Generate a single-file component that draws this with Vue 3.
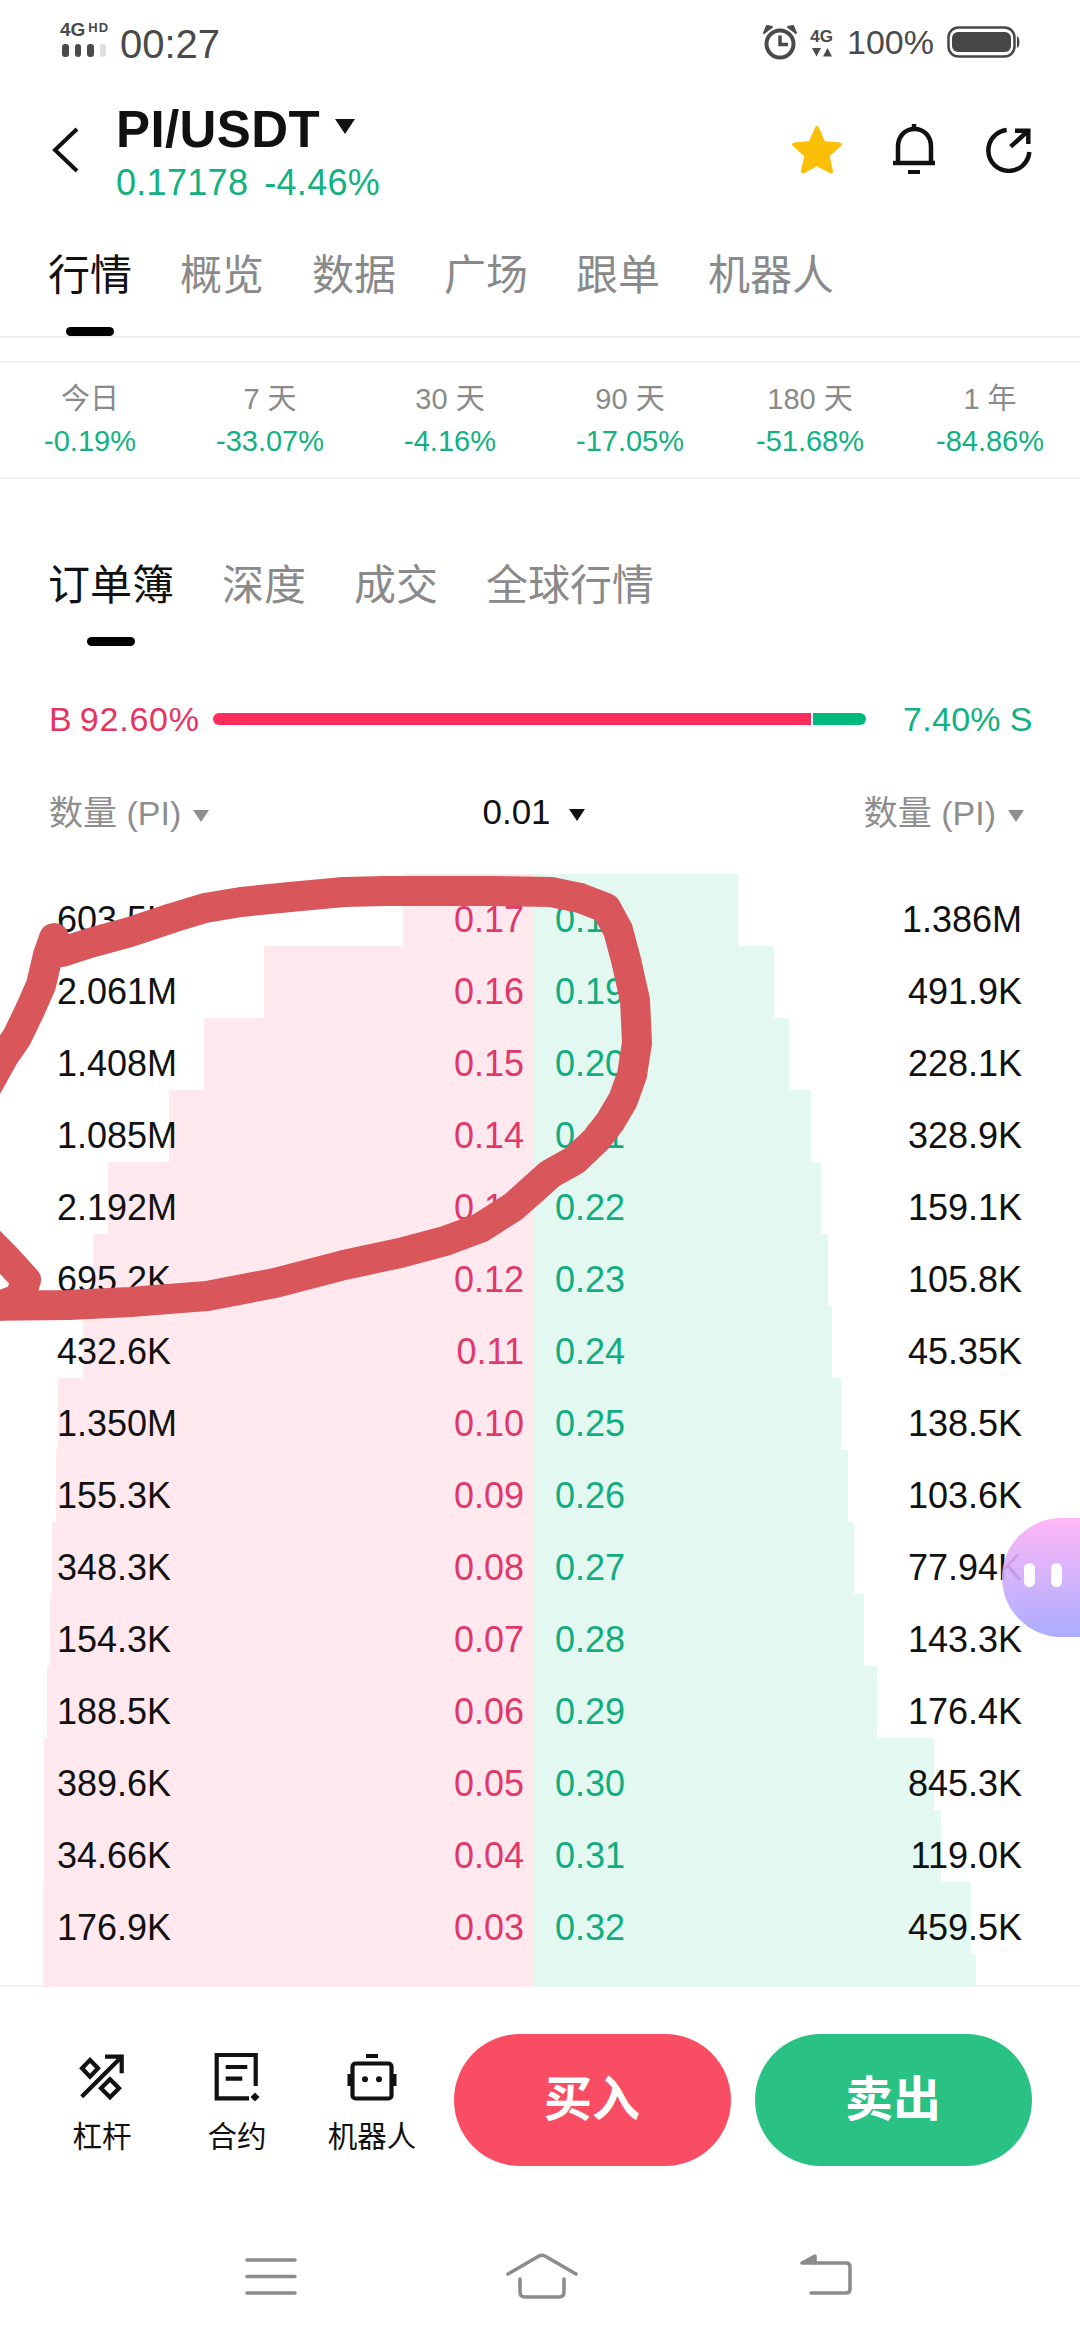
<template>
  <div class="page">
    <div class="status">
      <div class="net">
        <div class="net-top"><span class="g4">4G</span><span class="hd">HD</span></div>
        <div class="bars">
          <i></i><i></i><i></i><i class="off"></i>
        </div>
      </div>
      <span class="time">00:27</span>
      <div class="status-right">
        <svg class="alarm" width="36" height="36" viewBox="0 0 36 36">
          <circle cx="18" cy="20" r="13.5" fill="none" stroke="#4a4a4a" stroke-width="4" />
          <path d="M18 11.5V20.5H26" fill="none" stroke="#4a4a4a" stroke-width="3.5" />
          <path d="M2 9L10 3L5 2ZM34 9L26 3L31 2Z" fill="#4a4a4a" stroke="#4a4a4a" stroke-width="2" stroke-linejoin="round" />
        </svg>
        <div class="lte">
          <span>4G</span>
          <svg width="22" height="9" viewBox="0 0 22 9"><path d="M1 0H10L5.500 8.500ZM12 8.500H21L16.500 0Z" fill="#4a4a4a" /></svg>
        </div>
        <span class="pct">100%</span>
        <svg class="battery" width="74" height="32" viewBox="0 0 74 32">
          <rect x="1.500" y="1.500" width="66" height="29" rx="10" fill="none" stroke="#454745" stroke-width="2.500" />
          <rect x="5" y="6" width="59" height="20" rx="6" fill="#454745" />
          <path d="M70 10C73 11 73.500 21 70 22Z" fill="#454745" />
        </svg>
      </div>
    </div>

    <div class="head">
      <svg class="back" width="28" height="46" viewBox="0 0 28 46">
        <path d="M25 2L3 23L25 44" fill="none" stroke="#111" stroke-width="4" />
      </svg>
      <div class="title">
        <div class="pair">PI/USDT<span class="tri big"></span></div>
        <div class="price"><span>0.17178</span><span>-4.46%</span></div>
      </div>
      <div class="head-icons">
        <svg width="54" height="52" viewBox="0 0 54 52">
          <path d="M27 5L33.500 20.100L49.800 21.600L37.500 32.400L41.100 48.400L27 41L12.900 48.400L16.500 32.400L4.200 21.600L20.500 20.100Z" fill="#fcbf07" stroke="#fcbf07" stroke-width="4" stroke-linejoin="round" />
        </svg>
        <svg width="48" height="54" viewBox="0 0 48 54">
          <path d="M8 41V25C8 14 15 7 24.500 7C34 7 41 14 41 25V41" fill="none" stroke="#111" stroke-width="4.500" />
          <path d="M3 41H45" stroke="#111" stroke-width="4.500" />
          <path d="M24 2V8" stroke="#111" stroke-width="4.500" />
          <rect x="18" y="48" width="12" height="4" fill="#111" />
        </svg>
        <svg width="48" height="48" viewBox="0 0 48 48">
          <path d="M22.700 5A20.500 20.500 0 1 0 45.300 27" fill="none" stroke="#111" stroke-width="4.500" />
          <path d="M26.700 21.700L44.300 5.700M31 5.700H44.300V19" fill="none" stroke="#111" stroke-width="4.500" />
        </svg>
      </div>
    </div>

    <div class="tabs main">
      <div v-for="(t, i) in mainTabs" :key="t" class="tab" :class="{ on: i === 0 }">
        <span>{{ t }}</span>
        <i></i>
      </div>
    </div>

    <div class="periods">
      <div v-for="p in periods" :key="p.label" class="period">
        <span class="p-label">{{ p.label }}</span>
        <span class="p-value">{{ p.value }}</span>
      </div>
    </div>

    <div class="tabs sub">
      <div v-for="(t, i) in subTabs" :key="t" class="tab" :class="{ on: i === 0 }">
        <span>{{ t }}</span>
        <i></i>
      </div>
    </div>

    <div class="ratio">
      <span class="buy-pct">B 92.60%</span>
      <div class="ratio-bar">
        <div class="r-buy"></div>
        <div class="r-sell"></div>
      </div>
      <span class="sell-pct">7.40% S</span>
    </div>

    <div class="book-head">
      <span class="col-label">数量 (PI)<span class="tri grey"></span></span>
      <span class="step">0.01<span class="tri"></span></span>
      <span class="col-label">数量 (PI)<span class="tri grey"></span></span>
    </div>

    <div class="book">
      <div v-for="(r, i) in rows" :key="i" class="row" :class="{ stub: !r.bid }">
        <div class="band pink" :style="{ width: 534 - r.from + 'px' }"></div>
        <div class="band mint" :style="{ width: r.to - 534 + 'px' }"></div>
        <template v-if="r.bid">
          <span class="qty">{{ r.bidQty }}</span>
          <span class="bid">{{ r.bid }}</span>
          <span class="ask">{{ r.ask }}</span>
          <span class="qty right">{{ r.askQty }}</span>
        </template>
      </div>
    </div>

    <div class="footer">
      <div class="actions">
        <div class="tool">
          <svg width="48" height="48" viewBox="0 0 48 48" fill="none" stroke="#111" stroke-width="4.200">
            <path d="M3.700 43.700L43.700 3.700M27 3.700H43.700V20.300" />
            <path d="M12 7L20 15.300L12 23.600L4 15.300Z" />
            <path d="M32 26.300L41 35.300L32 44.300L23 35.300Z" />
          </svg>
          <span>杠杆</span>
        </div>
        <div class="tool">
          <svg width="48" height="48" viewBox="0 0 48 48" fill="none" stroke="#111" stroke-width="4.200">
            <path d="M42.700 33V2H3.700V45.300H36" />
            <path d="M12.700 14H34.300M12.700 25.700H29.300" />
            <path d="M42 39.500L46.500 44L42 48.500L37.500 44Z" fill="#111" stroke="none" />
          </svg>
          <span>合约</span>
        </div>
        <div class="tool">
          <svg width="52" height="48" viewBox="0 0 52 48" fill="none" stroke="#111" stroke-width="4.200">
            <rect x="6.500" y="10.500" width="39" height="35" rx="3" />
            <rect x="20" y="1" width="12" height="4" fill="#111" stroke="none" />
            <rect x="1.500" y="21" width="4" height="12" fill="#111" stroke="none" />
            <rect x="46.500" y="21" width="4" height="12" fill="#111" stroke="none" />
            <circle cx="19" cy="26.300" r="3" fill="#111" stroke="none" />
            <circle cx="33" cy="26.300" r="3" fill="#111" stroke="none" />
          </svg>
          <span>机器人</span>
        </div>
        <div class="btn buy">买入</div>
        <div class="btn sell">卖出</div>
      </div>
      <div class="nav">
        <svg width="52" height="42" viewBox="0 0 52 42" fill="none" stroke="#8c8c8c" stroke-width="3.600" stroke-linecap="round">
          <path d="M2 5H50M2 21.500H50M2 38H50" />
        </svg>
        <svg class="nav-home" width="72" height="46" viewBox="0 0 72 46" fill="none" stroke="#8c8c8c" stroke-width="3.600" stroke-linecap="round" stroke-linejoin="round">
          <path d="M2 21L33 3Q36 1.500 39 3L70 21" />
          <path d="M14 26V39Q14 44 19 44H53Q58 44 58 39V26" />
        </svg>
        <svg class="nav-back" width="54" height="46" viewBox="0 0 54 46" fill="none" stroke="#8c8c8c" stroke-width="3.600" stroke-linecap="round" stroke-linejoin="round">
          <path d="M16 3L3 10H16Z" fill="#8c8c8c" />
          <path d="M16 10H47Q51 10 51 14V36Q51 40 47 40H12" />
        </svg>
      </div>
    </div>

    <svg class="scribble" width="1080" height="2340" viewBox="0 0 1080 2340" fill="none">
      <path :d="scribble" stroke="#d9565b" stroke-width="30" stroke-linecap="round" stroke-linejoin="round" />
    </svg>

    <div class="bubble">
      <i></i><i></i>
    </div>
  </div>
</template>

<script setup>
const mainTabs = ['行情', '概览', '数据', '广场', '跟单', '机器人']
const subTabs = ['订单簿', '深度', '成交', '全球行情']

const periods = [
  { label: '今日', value: '-0.19%' },
  { label: '7 天', value: '-33.07%' },
  { label: '30 天', value: '-4.16%' },
  { label: '90 天', value: '-17.05%' },
  { label: '180 天', value: '-51.68%' },
  { label: '1 年', value: '-84.86%' }
]

const rows = [
  { bidQty: '603.5K', bid: '0.17', ask: '0.18', askQty: '1.386M', from: 403, to: 738 },
  { bidQty: '2.061M', bid: '0.16', ask: '0.19', askQty: '491.9K', from: 264, to: 774 },
  { bidQty: '1.408M', bid: '0.15', ask: '0.20', askQty: '228.1K', from: 204, to: 789 },
  { bidQty: '1.085M', bid: '0.14', ask: '0.21', askQty: '328.9K', from: 169, to: 811 },
  { bidQty: '2.192M', bid: '0.13', ask: '0.22', askQty: '159.1K', from: 108, to: 821 },
  { bidQty: '695.2K', bid: '0.12', ask: '0.23', askQty: '105.8K', from: 93, to: 828 },
  { bidQty: '432.6K', bid: '0.11', ask: '0.24', askQty: '45.35K', from: 83, to: 832 },
  { bidQty: '1.350M', bid: '0.10', ask: '0.25', askQty: '138.5K', from: 58, to: 841 },
  { bidQty: '155.3K', bid: '0.09', ask: '0.26', askQty: '103.6K', from: 56, to: 848 },
  { bidQty: '348.3K', bid: '0.08', ask: '0.27', askQty: '77.94K', from: 52, to: 854 },
  { bidQty: '154.3K', bid: '0.07', ask: '0.28', askQty: '143.3K', from: 50, to: 864 },
  { bidQty: '188.5K', bid: '0.06', ask: '0.29', askQty: '176.4K', from: 47, to: 877 },
  { bidQty: '389.6K', bid: '0.05', ask: '0.30', askQty: '845.3K', from: 44, to: 934 },
  { bidQty: '34.66K', bid: '0.04', ask: '0.31', askQty: '119.0K', from: 44, to: 941 },
  { bidQty: '176.9K', bid: '0.03', ask: '0.32', askQty: '459.5K', from: 43, to: 971 },
  { from: 43, to: 976 }
]

// hand drawn circle over the book, traced from the picture
const scribble =
  'M-16 1092 L4 1056 L17 1037 L30 1010 L41 985 L48 955 L54 938 L62 952 ' +
  'L90 943 L130 932 L172 918 L205 908 L241 902 L290 897 L344 892 L385 891 L427 891 ' +
  'L490 891 L551 892 L580 898 L606 908 L618 930 L626 960 L635 1000 L637 1043 ' +
  'L632 1075 L623 1100 L610 1122 L596 1140 L575 1160 L550 1174 L530 1192 L513 1207 L480 1228 ' +
  'L445 1241 L400 1253 L344 1265 L275 1283 L207 1296 L130 1302 L69 1305 L-20 1306 ' +
  'M-20 1232 L6 1258 L26 1280 L20 1298 L0 1306'
</script>

<style>
html,
body {
  margin: 0;
  background: #fff;
}
</style>

<style scoped>
.page {
  position: relative;
  width: 1080px;
  height: 2340px;
  overflow: hidden;
  background: #fff;
  font-family: "Liberation Sans", "Noto Sans CJK SC", sans-serif;
  color: #111;
}

/* status bar */
.status {
  display: flex;
  align-items: flex-start;
  height: 88px;
  padding-left: 60px;
  padding-right: 60px;
  box-sizing: border-box;
  color: #4a4a4a;
}

.net {
  width: 60px;
  padding-top: 21px;
}

.net-top {
  display: flex;
  align-items: flex-start;
  gap: 3px;
  height: 23px;
  font-weight: 700;
}

.g4 {
  font-size: 19px;
  line-height: 18px;
}

.hd {
  font-size: 13px;
  line-height: 13px;
  letter-spacing: 1px;
}

.bars {
  display: flex;
  gap: 6px;
  margin-left: 2px;
}

.bars i {
  display: block;
  width: 6.500px;
  height: 13px;
  border-radius: 3px;
  background: #4a4a4a;
}

.bars i.off {
  background: #dedede;
}

.time {
  font-size: 40px;
  line-height: 88px;
}

.status-right {
  display: flex;
  align-items: center;
  margin-left: auto;
  margin-right: -1px;
  height: 84px;
}

.alarm {
  margin-right: 12px;
}

.lte {
  display: flex;
  flex-direction: column;
  align-items: center;
  gap: 1px;
  margin-right: 14px;
  font-size: 17px;
  font-weight: 700;
  line-height: 20px;
}

.pct {
  font-size: 34px;
  margin-right: 13px;
}

/* header */
.head {
  display: flex;
  align-items: flex-start;
  height: 138px;
  padding-top: 12px;
  box-sizing: border-box;
}

.back {
  margin: 27px 36px 0 52px;
}

.pair {
  padding-top: 1px;
  font-size: 51px;
  font-weight: 700;
  line-height: 57px;
  letter-spacing: 0.4px;
}

.price {
  display: flex;
  gap: 16px;
  font-size: 36px;
  line-height: 50px;
  letter-spacing: 0.3px;
  color: #12b17f;
}

.head-icons {
  display: flex;
  align-items: center;
  margin-left: auto;
  margin-top: 22px;
  margin-right: 48px;
  gap: 46px;
}

.tri {
  display: inline-block;
  margin-left: 18px;
  vertical-align: middle;
  border-left: 8px solid transparent;
  border-right: 8px solid transparent;
  border-top: 12px solid #111;
}

.tri.big {
  margin-left: 15px;
  margin-bottom: 14px;
  border-left-width: 10px;
  border-right-width: 10px;
  border-top-width: 15px;
}

.tri.grey {
  border-top-color: #8e8e8e;
  margin-left: 12px;
}

/* tabs */
.tabs {
  display: flex;
  gap: 48px;
  padding-left: 48px;
  font-size: 42px;
  line-height: 48px;
  color: #8a8a8a;
}

.tabs.main {
  height: 112px;
  padding-top: 26px;
  box-sizing: border-box;
  border-bottom: 2px solid #f0f0f0;
}

.tabs.sub {
  margin-top: 83px;
}

.tab {
  display: flex;
  flex-direction: column;
  align-items: center;
}

.tab i {
  display: block;
  width: 48px;
  height: 9px;
  margin-top: 27px;
  border-radius: 5px;
}

.tab.on {
  color: #111;
}

.tab.on i {
  background: #000;
}

/* change per period */
.periods {
  display: grid;
  grid-template-columns: repeat(6, 180px);
  height: 118px;
  margin-top: 23px;
  padding-top: 16px;
  box-sizing: border-box;
  border-top: 2px solid #f0f0f0;
  border-bottom: 2px solid #f0f0f0;
}

.period {
  display: flex;
  flex-direction: column;
  align-items: center;
}

.p-label {
  font-size: 29px;
  line-height: 40px;
  color: #8a8a8a;
}

.p-value {
  margin-top: 3px;
  font-size: 29px;
  line-height: 38px;
  color: #12b17f;
}

/* buy / sell ratio */
.ratio {
  display: flex;
  align-items: center;
  height: 40px;
  margin-top: 53px;
  padding-left: 49px;
  font-size: 34px;
  letter-spacing: 0.8px;
}

.buy-pct {
  width: 164px;
  color: #e6345f;
  word-spacing: -3px;
}

.sell-pct {
  margin-left: 37px;
  color: #12b17f;
  letter-spacing: 0.3px;
  word-spacing: -1px;
}

.ratio-bar {
  display: flex;
  gap: 2px;
  width: 653px;
  height: 12px;
}

.r-buy {
  flex: 1;
  border-radius: 6px 0 0 6px;
  background: #ff2d5e;
}

.r-sell {
  width: 53px;
  border-radius: 0 6px 6px 0;
  background: #00b97c;
}

.book-head {
  display: flex;
  justify-content: space-between;
  align-items: center;
  height: 44px;
  margin-top: 50px;
  padding: 0 56px 0 49px;
}

.col-label {
  margin-top: -2px;
  font-size: 34px;
  color: #8e8e8e;
}

.step {
  margin-top: 2px;
  margin-right: 6px;
  font-size: 35px;
  color: #111;
}

/* order book */
.book {
  position: relative;
  z-index: 1;
  margin-top: 41px;
  margin-bottom: -2px;
}

.row {
  position: relative;
  display: grid;
  grid-template-columns: 397px 70px 31px 70px 397px;
  height: 72px;
  padding: 19px 58px 0 57px;
  box-sizing: border-box;
  font-size: 36px;
  line-height: 54px;
}

.row.stub {
  height: 33px;
  padding: 0;
}

.band {
  position: absolute;
  top: 0;
  bottom: 0;
}

.pink {
  right: 546px;
  background: #ffe9ee;
}

.mint {
  left: 534px;
  background: #e2f8f0;
}

.qty,
.bid,
.ask {
  position: relative;
}

.bid {
  grid-column: 2;
  text-align: right;
  color: #e0386a;
}

.ask {
  grid-column: 4;
  color: #12ad7e;
}

.qty.right {
  grid-column: 5;
  text-align: right;
}

/* bottom actions */
.footer {
  border-top: 2px solid #f0f0f0;
}

.actions {
  display: flex;
  align-items: flex-start;
  padding-top: 47px;
  padding-left: 34.500px;
}

.tool {
  display: flex;
  flex-direction: column;
  align-items: center;
  width: 135px;
  padding-top: 19px;
  font-size: 29.500px;
  line-height: 40px;
}

.tool span {
  margin-top: 16px;
}

.btn {
  width: 277px;
  height: 132px;
  border-radius: 66px;
  font-size: 48px;
  font-weight: 700;
  line-height: 132px;
  text-align: center;
  color: #fff;
}

.buy {
  margin-left: 14px;
  background: #f94d63;
}

.sell {
  margin-left: 24px;
  background: #2ac184;
}

.nav {
  display: flex;
  align-items: center;
  padding-left: 245px;
  margin-top: 87px;
}

.nav-home {
  margin-left: 209px;
}

.nav-back {
  margin-left: 221px;
}

.scribble {
  position: absolute;
  top: 0;
  left: 0;
  z-index: 2;
  pointer-events: none;
}

.bubble {
  position: absolute;
  z-index: 3;
  top: 1518px;
  left: 1002px;
  display: flex;
  gap: 16px;
  width: 140px;
  height: 119px;
  padding: 45px 0 0 22px;
  box-sizing: border-box;
  border-radius: 60px;
  background: linear-gradient(#ffb0f6, #a3a5ff);
  opacity: 0.9;
}

.bubble i {
  display: block;
  width: 11px;
  height: 24px;
  border-radius: 6px;
  background: #fff;
}
</style>
